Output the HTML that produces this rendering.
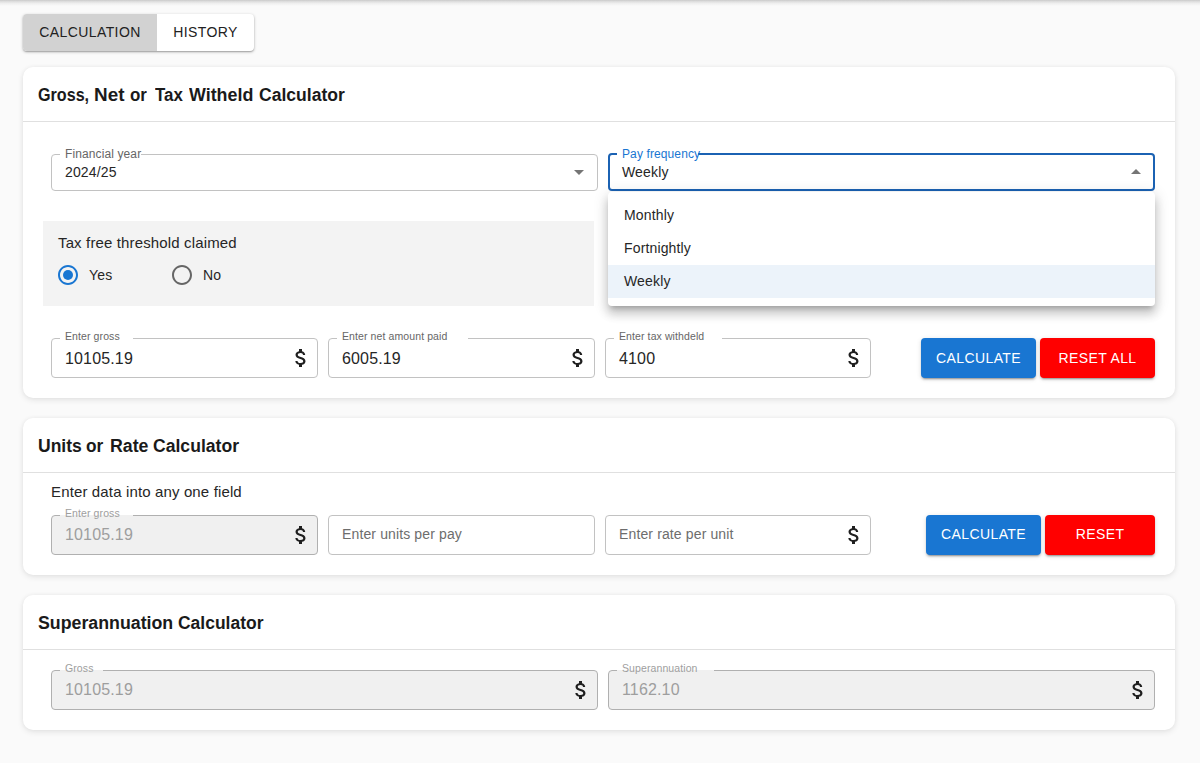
<!DOCTYPE html>
<html><head><meta charset="utf-8">
<style>
*{box-sizing:border-box;margin:0;padding:0}
html,body{width:1200px;height:763px;overflow:hidden}
body{background:#fafafa;font-family:"Liberation Sans",sans-serif;color:#212121;position:relative}
.topshadow{position:absolute;left:0;top:0;width:1200px;height:6px;background:linear-gradient(#c9c9c9 0,#dcdcdc 22%,#eeeeee 55%,#fafafa 100%)}
.abs{position:absolute}
.tabs{position:absolute;left:23px;top:14px;width:231px;height:37px;border-radius:4px;background:#fff;box-shadow:0 1px 3px rgba(0,0,0,.3),0 1px 1px rgba(0,0,0,.14);display:flex;overflow:hidden}
.tab{height:37px;line-height:37px;font-size:14px;text-align:center;color:#212121;letter-spacing:.4px}
.tab.sel{background:#d2d2d2;width:134px}
.tab.un{width:97px}
.card{position:absolute;left:23px;width:1152px;background:#fff;border-radius:10px;box-shadow:0 2px 6px rgba(0,0,0,.09),0 0 4px rgba(0,0,0,.04)}
.title{position:absolute;left:38px;font-weight:bold;font-size:17px;color:#1a1a1a;white-space:nowrap}
.tw{position:absolute;font-weight:bold;font-size:18px;line-height:30px;color:#1a1a1a;white-space:nowrap;transform-origin:0 0}
.hr{position:absolute;left:23px;width:1152px;height:1px;background:#e0e0e0}
.field{position:absolute;border:1px solid #c2c2c2;border-radius:4px;background:#fff}
.field.dis{background:#f0f0f0;border-color:#b0b0b0}
.lbl{position:absolute;font-size:10.5px;letter-spacing:.1px;color:#666;background:#fff;white-space:nowrap;line-height:12px;padding:0 5px}
.lbl.dis{color:#9e9e9e;background:linear-gradient(#fff 8px,#f0f0f0 8px)}
.val{position:absolute;font-size:16px;letter-spacing:.15px;color:#262626;white-space:nowrap;line-height:18px}
.val.dis{color:#9e9e9e}
.ph{color:#6d6d6d}
.ico{position:absolute;width:24px;height:24px}
.btn{position:absolute;height:40px;line-height:40px;border-radius:4px;color:#fff;font-size:14px;text-align:center;letter-spacing:.4px;box-shadow:0 3px 1px -2px rgba(0,0,0,.2),0 2px 2px 0 rgba(0,0,0,.14),0 1px 5px 0 rgba(0,0,0,.12)}
.blue{background:#1976d2}
.red{background:#ff0000}
</style></head><body>
<div class="topshadow"></div>
<div class="tabs"><div class="tab sel">CALCULATION</div><div class="tab un">HISTORY</div></div>

<!-- card 1 -->
<div class="card" style="top:67px;height:331px"></div>
<div class="tw" style="left:37.9px;top:80px;transform:scaleX(0.896)">Gross,</div><div class="tw" style="left:94.2px;top:80px;transform:scaleX(1.050)">Net</div><div class="tw" style="left:129.9px;top:80px;transform:scaleX(0.941)">or</div><div class="tw" style="left:155.3px;top:80px;transform:scaleX(0.938)">Tax</div><div class="tw" style="left:189.2px;top:80px;transform:scaleX(0.992)">Witheld</div><div class="tw" style="left:258.9px;top:80px;transform:scaleX(0.975)">Calculator</div>
<div class="hr" style="top:121px"></div>

<div class="field" style="left:51px;top:154px;width:547px;height:37px"></div>
<div class="lbl" style="left:60px;top:148px;padding:0 0 0 5px;width:81px;font-size:12px;letter-spacing:.11px">Financial year</div>
<div class="val" style="left:65px;top:163px;font-size:14px">2024/25</div>

<div class="field" style="left:608px;top:153px;width:547px;height:38px;border:2px solid #1b62b3"></div>
<div class="lbl" style="left:617px;top:148px;padding:0 0 0 5px;width:81px;font-size:12px;letter-spacing:.11px;color:#1976d2">Pay frequency</div>
<div class="val" style="left:622px;top:163px;font-size:14px">Weekly</div>

<div class="abs" style="left:43px;top:221px;width:551px;height:85px;background:#f3f3f3"></div>
<div class="val" style="left:58px;top:234px;font-size:15px;letter-spacing:.14px">Tax free threshold claimed</div>
<div class="val" style="left:89px;top:266px;font-size:14px">Yes</div>
<div class="val" style="left:203px;top:266px;font-size:14px">No</div>


<svg class="ico" style="left:56px;top:263px" viewBox="0 0 24 24"><path fill="#1976d2" d="M12 2C6.48 2 2 6.48 2 12s4.48 10 10 10 10-4.48 10-10S17.52 2 12 2zm0 18c-4.42 0-8-3.58-8-8s3.58-8 8-8 8 3.58 8 8-3.58 8-8 8z"/><circle cx="12" cy="12" r="5" fill="#1976d2"/></svg>
<svg class="ico" style="left:170px;top:263px" viewBox="0 0 24 24"><path fill="#666" d="M12 2C6.48 2 2 6.48 2 12s4.48 10 10 10 10-4.48 10-10S17.52 2 12 2zm0 18c-4.42 0-8-3.58-8-8s3.58-8 8-8 8 3.58 8 8-3.58 8-8 8z"/></svg>
<svg class="ico" style="left:567px;top:160px" viewBox="0 0 24 24"><path fill="#757575" d="M7 10l5 5 5-5z"/></svg>
<svg class="ico" style="left:1124px;top:160px" viewBox="0 0 24 24"><path fill="#757575" d="M7 14l5-5 5 5z"/></svg>
<!-- dropdown -->
<div class="abs" style="left:608px;top:192px;width:547px;height:114px;background:#fff;border-radius:4px;box-shadow:0 5px 5px -3px rgba(0,0,0,.2),0 8px 10px 1px rgba(0,0,0,.14),0 3px 14px 2px rgba(0,0,0,.12)"></div>
<div class="abs" style="left:608px;top:265px;width:547px;height:33px;background:#ecf3fa"></div>
<div class="val" style="left:624px;top:206px;font-size:14px">Monthly</div>
<div class="val" style="left:624px;top:239px;font-size:14px">Fortnightly</div>
<div class="val" style="left:624px;top:272px;font-size:14px">Weekly</div>

<div class="field" style="left:51px;top:338px;width:267px;height:40px"></div>
<div class="field" style="left:328px;top:338px;width:267px;height:40px"></div>
<div class="field" style="left:605px;top:338px;width:266px;height:40px"></div>

<div class="lbl" style="left:60px;top:330px;width:73px">Enter gross</div>
<div class="val" style="left:65px;top:350px">10105.19</div>
<svg class="ico" style="left:289px;top:346px" viewBox="0 0 24 24"><path fill="#1f1f1f" d="M11.8 10.9c-2.27-.59-3-1.2-3-2.15 0-1.09 1.01-1.85 2.7-1.85 1.78 0 2.44.85 2.5 2.1h2.21c-.07-1.72-1.12-3.3-3.21-3.81V3h-3v2.16c-1.94.42-3.5 1.68-3.5 3.61 0 2.31 1.91 3.46 4.7 4.13 2.5.6 3 1.48 3 2.41 0 .69-.49 1.79-2.7 1.79-2.06 0-2.87-.92-2.98-2.1h-2.2c.12 2.19 1.76 3.42 3.68 3.83V21h3v-2.15c1.95-.37 3.5-1.5 3.5-3.55 0-2.84-2.43-3.81-4.7-4.4z"/></svg>
<div class="lbl" style="left:337px;top:330px;width:131px">Enter net amount paid</div>
<div class="val" style="left:342px;top:350px">6005.19</div>
<svg class="ico" style="left:566px;top:346px" viewBox="0 0 24 24"><path fill="#1f1f1f" d="M11.8 10.9c-2.27-.59-3-1.2-3-2.15 0-1.09 1.01-1.85 2.7-1.85 1.78 0 2.44.85 2.5 2.1h2.21c-.07-1.72-1.12-3.3-3.21-3.81V3h-3v2.16c-1.94.42-3.5 1.68-3.5 3.61 0 2.31 1.91 3.46 4.7 4.13 2.5.6 3 1.48 3 2.41 0 .69-.49 1.79-2.7 1.79-2.06 0-2.87-.92-2.98-2.1h-2.2c.12 2.19 1.76 3.42 3.68 3.83V21h3v-2.15c1.95-.37 3.5-1.5 3.5-3.55 0-2.84-2.43-3.81-4.7-4.4z"/></svg>
<div class="lbl" style="left:614px;top:330px;width:108px">Enter tax withdeld</div>
<div class="val" style="left:619px;top:350px">4100</div>
<svg class="ico" style="left:842px;top:346px" viewBox="0 0 24 24"><path fill="#1f1f1f" d="M11.8 10.9c-2.27-.59-3-1.2-3-2.15 0-1.09 1.01-1.85 2.7-1.85 1.78 0 2.44.85 2.5 2.1h2.21c-.07-1.72-1.12-3.3-3.21-3.81V3h-3v2.16c-1.94.42-3.5 1.68-3.5 3.61 0 2.31 1.91 3.46 4.7 4.13 2.5.6 3 1.48 3 2.41 0 .69-.49 1.79-2.7 1.79-2.06 0-2.87-.92-2.98-2.1h-2.2c.12 2.19 1.76 3.42 3.68 3.83V21h3v-2.15c1.95-.37 3.5-1.5 3.5-3.55 0-2.84-2.43-3.81-4.7-4.4z"/></svg><div class="btn blue" style="left:921px;top:338px;width:115px">CALCULATE</div>
<div class="btn red" style="left:1040px;top:338px;width:115px">RESET ALL</div>

<!-- card 2 -->
<div class="card" style="top:418px;height:157px"></div>
<div class="tw" style="left:37.8px;top:431px;transform:scaleX(0.974)">Units</div><div class="tw" style="left:86.3px;top:431px;transform:scaleX(0.959)">or</div><div class="tw" style="left:109.8px;top:431px;transform:scaleX(0.986)">Rate</div><div class="tw" style="left:152.5px;top:431px;transform:scaleX(0.977)">Calculator</div>
<div class="hr" style="top:472px"></div>


<div class="val" style="left:51px;top:483px;font-size:15px;letter-spacing:.14px">Enter data into any one field</div>
<div class="field dis" style="left:51px;top:515px;width:267px;height:40px"></div>
<div class="lbl dis" style="left:60px;top:507px;width:73px">Enter gross</div>
<div class="val dis" style="left:65px;top:526px">10105.19</div>
<svg class="ico" style="left:289px;top:523px" viewBox="0 0 24 24"><path fill="#1f1f1f" d="M11.8 10.9c-2.27-.59-3-1.2-3-2.15 0-1.09 1.01-1.85 2.7-1.85 1.78 0 2.44.85 2.5 2.1h2.21c-.07-1.72-1.12-3.3-3.21-3.81V3h-3v2.16c-1.94.42-3.5 1.68-3.5 3.61 0 2.31 1.91 3.46 4.7 4.13 2.5.6 3 1.48 3 2.41 0 .69-.49 1.79-2.7 1.79-2.06 0-2.87-.92-2.98-2.1h-2.2c.12 2.19 1.76 3.42 3.68 3.83V21h3v-2.15c1.95-.37 3.5-1.5 3.5-3.55 0-2.84-2.43-3.81-4.7-4.4z"/></svg>
<div class="field" style="left:328px;top:515px;width:267px;height:40px"></div>
<div class="val ph" style="left:342px;top:525px;font-size:14px;letter-spacing:.13px">Enter units per pay</div>
<div class="field" style="left:605px;top:515px;width:266px;height:40px"></div>
<div class="val ph" style="left:619px;top:525px;font-size:14px;letter-spacing:.13px">Enter rate per unit</div>
<svg class="ico" style="left:842px;top:523px" viewBox="0 0 24 24"><path fill="#1f1f1f" d="M11.8 10.9c-2.27-.59-3-1.2-3-2.15 0-1.09 1.01-1.85 2.7-1.85 1.78 0 2.44.85 2.5 2.1h2.21c-.07-1.72-1.12-3.3-3.21-3.81V3h-3v2.16c-1.94.42-3.5 1.68-3.5 3.61 0 2.31 1.91 3.46 4.7 4.13 2.5.6 3 1.48 3 2.41 0 .69-.49 1.79-2.7 1.79-2.06 0-2.87-.92-2.98-2.1h-2.2c.12 2.19 1.76 3.42 3.68 3.83V21h3v-2.15c1.95-.37 3.5-1.5 3.5-3.55 0-2.84-2.43-3.81-4.7-4.4z"/></svg>
<div class="btn blue" style="left:926px;top:515px;width:115px;line-height:38px">CALCULATE</div>
<div class="btn red" style="left:1045px;top:515px;width:110px;line-height:38px">RESET</div>
<!-- card 3 -->
<div class="card" style="top:595px;height:135px"></div>
<div class="tw" style="left:37.8px;top:608px;transform:scaleX(0.987)">Superannuation</div><div class="tw" style="left:177.8px;top:608px;transform:scaleX(0.971)">Calculator</div>
<div class="hr" style="top:649px"></div>

<div class="field dis" style="left:51px;top:670px;width:547px;height:40px"></div>
<div class="lbl dis" style="left:60px;top:662px;width:43px">Gross</div>
<div class="val dis" style="left:65px;top:681px">10105.19</div>
<svg class="ico" style="left:569px;top:678px" viewBox="0 0 24 24"><path fill="#1f1f1f" d="M11.8 10.9c-2.27-.59-3-1.2-3-2.15 0-1.09 1.01-1.85 2.7-1.85 1.78 0 2.44.85 2.5 2.1h2.21c-.07-1.72-1.12-3.3-3.21-3.81V3h-3v2.16c-1.94.42-3.5 1.68-3.5 3.61 0 2.31 1.91 3.46 4.7 4.13 2.5.6 3 1.48 3 2.41 0 .69-.49 1.79-2.7 1.79-2.06 0-2.87-.92-2.98-2.1h-2.2c.12 2.19 1.76 3.42 3.68 3.83V21h3v-2.15c1.95-.37 3.5-1.5 3.5-3.55 0-2.84-2.43-3.81-4.7-4.4z"/></svg>
<div class="field dis" style="left:608px;top:670px;width:547px;height:40px"></div>
<div class="lbl dis" style="left:617px;top:662px;width:97px">Superannuation</div>
<div class="val dis" style="left:622px;top:681px">1162.10</div>
<svg class="ico" style="left:1126px;top:678px" viewBox="0 0 24 24"><path fill="#1f1f1f" d="M11.8 10.9c-2.27-.59-3-1.2-3-2.15 0-1.09 1.01-1.85 2.7-1.85 1.78 0 2.44.85 2.5 2.1h2.21c-.07-1.72-1.12-3.3-3.21-3.81V3h-3v2.16c-1.94.42-3.5 1.68-3.5 3.61 0 2.31 1.91 3.46 4.7 4.13 2.5.6 3 1.48 3 2.41 0 .69-.49 1.79-2.7 1.79-2.06 0-2.87-.92-2.98-2.1h-2.2c.12 2.19 1.76 3.42 3.68 3.83V21h3v-2.15c1.95-.37 3.5-1.5 3.5-3.55 0-2.84-2.43-3.81-4.7-4.4z"/></svg></body></html>
